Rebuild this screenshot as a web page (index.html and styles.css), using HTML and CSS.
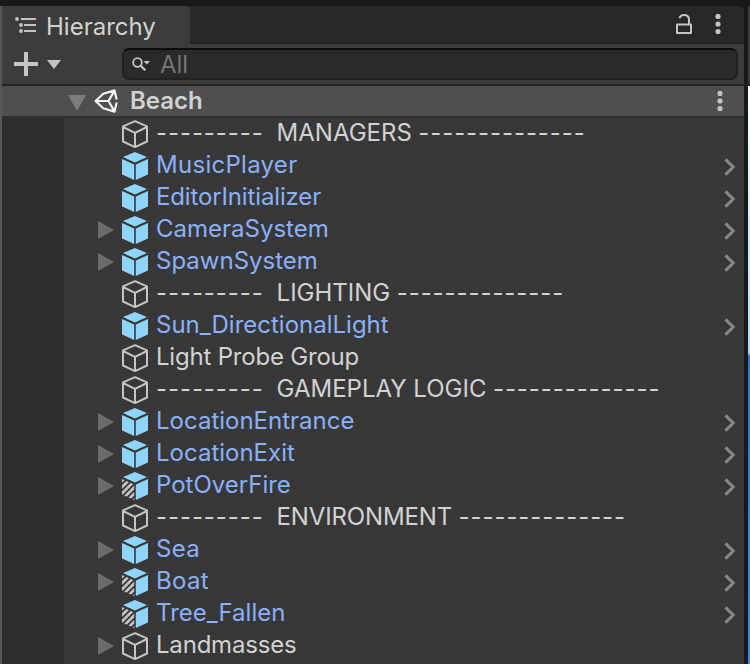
FILE: index.html
```
<!DOCTYPE html>
<html lang="en">
<head>
<meta charset="utf-8">
<title>Hierarchy</title>
<link rel="stylesheet" href="styles.css">
</head>
<body>
<svg class="defs" width="0" height="0">
  <defs>
    <symbol id="cube" viewBox="0 0 28 30">
      <path d="M14 2.200 26 7.400V22.500L14 28.200 2 22.500V7.400ZM2 8 14 13.900 26 8M14 13.900V28" fill="none" stroke="#c4c4c4" stroke-width="2" stroke-linejoin="round"/>
    </symbol>
    <symbol id="prefab" viewBox="0 0 28 30">
      <path d="M14 1 26 6 14 11.500 2 6ZM1 8 13.200 13.500V29L1 23.500ZM27 8 14.800 13.500V29L27 23.500Z" fill="#8fd5fb"/>
    </symbol>
    <clipPath id="left-face"><path d="M1 8 13.200 13.500V29L1 23.500Z"/></clipPath>
    <symbol id="variant" viewBox="0 0 28 30">
      <path d="M14 1 26 6 14 11.500 2 6ZM27 8 14.800 13.500V29L27 23.500Z" fill="#8fd5fb"/>
      <path clip-path="url(#left-face)" d="M-2 13 14 -3M-2 19.200 16 1.200M-2 25.400 16 7.400M-2 31.600 16 13.600M-2 37.800 16 19.800M-2 44 16 26" stroke="#c4c4c4" stroke-width="2.600"/>
    </symbol>
    <symbol id="fold" viewBox="0 0 16 18"><path d="M0 0 16 9 0 18Z" fill="#6b6b6b"/></symbol>
    <symbol id="chevron" viewBox="0 0 12 18"><path d="M1.500 1.300 9.200 9 1.500 16.700" fill="none" stroke="#868686" stroke-width="3.100"/></symbol>
    <symbol id="dots" viewBox="0 0 6 20"><g fill="#c4c4c4"><circle cx="3" cy="2.500" r="2.600"/><circle cx="3" cy="10" r="2.600"/><circle cx="3" cy="17.500" r="2.600"/></g></symbol>
  </defs>
</svg>
<div class="window">
  <main class="panel">
    <header class="tabs">
      <div class="tab">
        <svg class="list-icon" viewBox="0 0 22 16"><g fill="#c4c4c4"><circle cx="2" cy="2" r="1.900"/><circle cx="6" cy="8" r="1.900"/><circle cx="6" cy="14" r="1.900"/><path d="M6 1h15v2H6zM9 7h12v2H9zM9 13h12v2H9z"/></g></svg>
        <span>Hierarchy</span>
      </div>
      <div class="tab-actions">
        <svg class="lock" viewBox="0 0 16 20"><path d="M1 10.500H15V19H1ZM3.500 4.200C4 2.200 5.700 1 8 1C11 1 13 2.500 13 5.500V10" fill="none" stroke="#c4c4c4" stroke-width="2" stroke-linejoin="round"/></svg>
        <svg class="dots"><use href="#dots"/></svg>
      </div>
    </header>
    <div class="toolbar">
      <svg class="plus" viewBox="0 0 24 24"><path d="M12 0V24M0 12H24" stroke="#c4c4c4" stroke-width="4"/></svg>
      <svg class="caret" viewBox="0 0 14 9"><path d="M0 0H14L7 9Z" fill="#c4c4c4"/></svg>
      <div class="search">
        <svg class="lens" viewBox="0 0 18 14"><g fill="none" stroke="#c4c4c4"><circle cx="5.500" cy="5.500" r="4.300" stroke-width="1.800"/><path d="M8.500 8.500 13.300 13.300" stroke-width="2.300"/></g><path d="M11.500 4H18L14.800 7.500Z" fill="#c4c4c4"/></svg>
        <span class="placeholder">All</span>
      </div>
    </div>
    <div class="scene">
      <svg class="scene-fold" viewBox="0 0 18 16"><path d="M0 0H18L9 16Z" fill="#7c7c7c"/></svg>
      <svg class="unity" viewBox="0 0 24 24"><path d="M8.500 5 20.500 1.400 22.700 10.500M22.700 13.500 20.500 22.600 8.500 19M9 5 1.600 12 9 19M1.600 12H14.500M14.500 12 20.500 1.600M14.500 12 20.500 22.400" fill="none" stroke="#f2f2f2" stroke-width="2.200" stroke-linejoin="round"/></svg>
      <span class="scene-name">Beach</span>
      <svg class="dots"><use href="#dots"/></svg>
    </div>
    <div class="tree">
      <div class="gutter"></div>
      <div class="rows">
        <div class="row"><i class="fold"></i><svg class="cube"><use href="#cube"/></svg><span class="name"><span class="rule">---------  </span>MANAGERS<span class="rule"> --------------</span></span></div>
        <div class="row prefab"><i class="fold"></i><svg class="cube"><use href="#prefab"/></svg><span class="name wide">MusicPlayer</span><svg class="chevron"><use href="#chevron"/></svg></div>
        <div class="row prefab"><i class="fold"></i><svg class="cube"><use href="#prefab"/></svg><span class="name tight">EditorInitializer</span><svg class="chevron"><use href="#chevron"/></svg></div>
        <div class="row prefab"><svg class="fold"><use href="#fold"/></svg><svg class="cube"><use href="#prefab"/></svg><span class="name">CameraSystem</span><svg class="chevron"><use href="#chevron"/></svg></div>
        <div class="row prefab"><svg class="fold"><use href="#fold"/></svg><svg class="cube"><use href="#prefab"/></svg><span class="name">SpawnSystem</span><svg class="chevron"><use href="#chevron"/></svg></div>
        <div class="row"><i class="fold"></i><svg class="cube"><use href="#cube"/></svg><span class="name"><span class="rule">---------  </span>LIGHTING<span class="rule"> --------------</span></span></div>
        <div class="row prefab"><i class="fold"></i><svg class="cube"><use href="#prefab"/></svg><span class="name">Sun_DirectionalLight</span><svg class="chevron"><use href="#chevron"/></svg></div>
        <div class="row"><i class="fold"></i><svg class="cube"><use href="#cube"/></svg><span class="name tighter">Light Probe Group</span></div>
        <div class="row"><i class="fold"></i><svg class="cube"><use href="#cube"/></svg><span class="name"><span class="rule">---------  </span>GAMEPLAY LOGIC<span class="rule"> --------------</span></span></div>
        <div class="row prefab"><svg class="fold"><use href="#fold"/></svg><svg class="cube"><use href="#prefab"/></svg><span class="name">LocationEntrance</span><svg class="chevron"><use href="#chevron"/></svg></div>
        <div class="row prefab"><svg class="fold"><use href="#fold"/></svg><svg class="cube"><use href="#prefab"/></svg><span class="name">LocationExit</span><svg class="chevron"><use href="#chevron"/></svg></div>
        <div class="row prefab"><svg class="fold"><use href="#fold"/></svg><svg class="cube"><use href="#variant"/></svg><span class="name">PotOverFire</span><svg class="chevron"><use href="#chevron"/></svg></div>
        <div class="row"><i class="fold"></i><svg class="cube"><use href="#cube"/></svg><span class="name tight"><span class="rule">---------  </span>ENVIRONMENT<span class="rule"> --------------</span></span></div>
        <div class="row prefab"><svg class="fold"><use href="#fold"/></svg><svg class="cube"><use href="#prefab"/></svg><span class="name wide">Sea</span><svg class="chevron"><use href="#chevron"/></svg></div>
        <div class="row prefab"><svg class="fold"><use href="#fold"/></svg><svg class="cube"><use href="#variant"/></svg><span class="name wide">Boat</span><svg class="chevron"><use href="#chevron"/></svg></div>
        <div class="row prefab"><i class="fold"></i><svg class="cube"><use href="#variant"/></svg><span class="name">Tree_Fallen</span><svg class="chevron"><use href="#chevron"/></svg></div>
        <div class="row"><svg class="fold"><use href="#fold"/></svg><svg class="cube"><use href="#cube"/></svg><span class="name tighter">Landmasses</span></div>
      </div>
    </div>
  </main>
  <aside class="neighbor"><div class="neighbor-bar"></div><div class="neighbor-view"></div></aside>
</div>
</body>
</html>
```
FILE: styles.css
```
* { box-sizing: border-box; }
body {
  margin: 0;
  height: 664px;
  overflow: hidden;
  background: #191919;
  font: 400 24px/32px Inter, "Liberation Sans", sans-serif;
  color: #d2d2d2;
}
svg { display: block; flex: none; }
.defs { position: absolute; }
.window { display: flex; height: 664px; padding-top: 6px; gap: 4px; }
.panel {
  width: 744px;
  display: flex;
  flex-direction: column;
  border-left: 2px solid #565656;
  border-radius: 0 6px 0 0;
  overflow: hidden;
  background: #383838;
}
.tabs { display: flex; height: 38px; background: #282828; border-bottom: 2px solid #232323; flex: none; }
.tab {
  display: flex;
  gap: 9px;
  width: 188px;
  height: 38px;
  padding-left: 13px;
  background: #3c3c3c;
  border-radius: 0 5px 0 0;
  line-height: 41px;
}
.list-icon { width: 22px; height: 16px; margin-top: 11px; }
.tab-actions { display: flex; margin-left: auto; padding: 8px 23px 0 0; gap: 23px; }
.lock { width: 16px; height: 20px; }
.dots { width: 6px; height: 20px; }
.toolbar { display: flex; align-items: center; height: 40px; padding: 0 6px 0 12px; background: #3c3c3c; flex: none; }
.plus { width: 24px; height: 24px; }
.caret { width: 14px; height: 9px; margin-left: 9px; }
.search {
  display: flex;
  align-items: center;
  flex: 1;
  height: 32px;
  margin-left: 61px;
  padding-left: 8px;
  gap: 10px;
  background: #2a2a2a;
  border: 2px solid #212121;
  border-top-color: #0d0d0d;
  border-radius: 7px;
  color: #757575;
}
.lens { width: 18px; height: 14px; }
.placeholder { margin-top: 2px; }
.scene {
  display: flex;
  align-items: center;
  height: 34px;
  padding: 0 21px 0 66px;
  background: #4f4f4f;
  border-top: 2px solid #232323;
  border-bottom: 2px solid #303030;
  flex: none;
}
.scene-fold { width: 18px; height: 16px; margin-top: 3px; }
.unity { width: 24px; height: 24px; margin-left: 8px; }
.scene-name { margin-left: 12px; font-weight: 600; }
.scene .dots { margin-left: auto; }
.tree { display: flex; flex: 1; min-height: 0; }
.gutter { width: 62px; background: #2d2d2d; }
.rows { flex: 1; }
.row { display: flex; align-items: center; height: 32px; padding: 0 8px 0 34px; }
.fold { width: 16px; height: 18px; }
.cube { width: 28px; height: 30px; margin-left: 7px; }
.name { margin: -3px 0 0 7px; white-space: pre; letter-spacing: 0; }
.wide { letter-spacing: 0.28px; }
.tight { letter-spacing: -0.14px; }
.tighter { letter-spacing: -0.2px; }
.rule { letter-spacing: 0.92px; word-spacing: -1.2px; }
.prefab { color: #8ab1f8; }
.chevron { width: 12px; height: 18px; margin: 2px 0 0 auto; }
.neighbor { width: 2px; }
.neighbor-bar { height: 80px; background: #3c3c3c; border-bottom: 2px solid #191919; }
.neighbor-view { height: 578px; background: linear-gradient(#f5ffff 0, #a9d8f6 267px, #2b78cc 270px, #3a8de0 578px); }
```
